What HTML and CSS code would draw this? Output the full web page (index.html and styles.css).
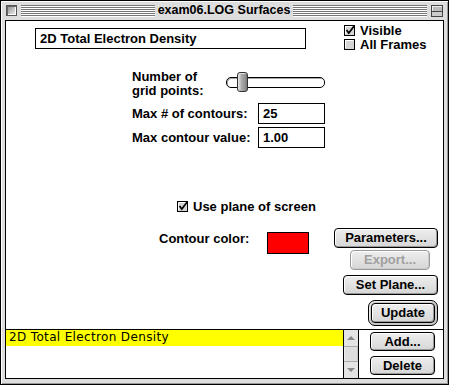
FILE: index.html
```html
<!DOCTYPE html>
<html>
<head>
<meta charset="utf-8">
<link rel="stylesheet" href="styles.css">
</head>
<body>
<div class="window">
  <div class="titlebar">
    <span class="closebox"></span>
    <span class="stripes"></span>
    <span class="title">exam06.LOG Surfaces</span>
    <span class="stripes"></span>
    <span class="zoombox"><span class="zoominner"></span></span>
  </div>
  <div class="frame">
    <div class="panel">
      <div class="toprow">
        <div class="namefield">2D Total Electron Density</div>
        <div class="checks">
          <div class="check">
            <svg class="cb" width="13" height="13" viewBox="0 0 13 13"><rect x="0.5" y="1.5" width="10" height="10" fill="#d4d4d4" stroke="#000"/><path d="M1.5 10 V2.5 H9.5" fill="none" stroke="#fff"/><path d="M2.5 6 L4.8 9 L10.5 1.5" fill="none" stroke="#000" stroke-width="1.7"/></svg>
            <span>Visible</span>
          </div>
          <div class="check">
            <svg class="cb" width="13" height="13" viewBox="0 0 13 13"><rect x="0.5" y="1.5" width="10" height="10" fill="#d4d4d4" stroke="#000"/><path d="M1.5 10 V2.5 H9.5" fill="none" stroke="#fff"/></svg>
            <span>All Frames</span>
          </div>
        </div>
      </div>
      <div class="params">
        <div class="lbl-grid">Number of<br>grid points:</div>
        <div class="slider">
          <div class="track"></div>
          <div class="thumb"></div>
        </div>
        <div class="lbl">Max # of contours:</div>
        <div class="field">25</div>
        <div class="lbl">Max contour value:</div>
        <div class="field">1.00</div>
      </div>
      <div class="check plane">
        <svg class="cb" width="13" height="13" viewBox="0 0 13 13"><rect x="0.5" y="1.5" width="10" height="10" fill="#d4d4d4" stroke="#000"/><path d="M1.5 10 V2.5 H9.5" fill="none" stroke="#fff"/><path d="M2.5 6 L4.8 9 L10.5 1.5" fill="none" stroke="#000" stroke-width="1.7"/></svg>
        <span>Use plane of screen</span>
      </div>
      <div class="lower">
        <div class="colorrow">
          <span class="colorlbl">Contour color:</span>
          <span class="swatch"></span>
        </div>
        <div class="btncol">
          <div class="btn w-params">Parameters...</div>
          <div class="btn disabled w-export">Export...</div>
          <div class="btn w-plane">Set Plane...</div>
          <div class="default-ring"><div class="btn w-update">Update</div></div>
        </div>
      </div>
    </div>
    <div class="listarea">
      <div class="list">
        <div class="item selected">2D Total Electron Density</div>
      </div>
      <div class="scrollbar">
        <div class="arrowcell"><span class="up"></span></div>
        <div class="scrolltrack"></div>
        <div class="arrowcell"><span class="down"></span></div>
      </div>
      <div class="listbtns">
        <div class="btn w-small">Add...</div>
        <div class="btn w-small">Delete</div>
      </div>
    </div>
  </div>
</div>
</body>
</html>
```
FILE: styles.css
```css
html, body { margin: 0; padding: 0; background: #fff; }
.window {
  width: 449px; height: 385px; box-sizing: border-box;
  border: 1px solid #000; background: #dddddd;
  display: flex; flex-direction: column;
  font: bold 13px "Liberation Sans", Arial, sans-serif; color: #000;
  box-shadow: inset 1px 1px #fff, inset -1px -1px #999;
}
.titlebar {
  height: 19px; flex: none; display: flex; align-items: center;
  padding: 0 5px 0 5px;
}
.closebox {
  width: 11px; height: 11px; box-sizing: border-box; flex: none;
  border: 1px solid #555;
  background: linear-gradient(135deg, #888 0%, #f4f4f4 100%);
  box-shadow: inset 1px 1px #666, inset -1px -1px #fff;
}
.stripes {
  flex: 1; height: 12px; margin-left: 4px;
  background: repeating-linear-gradient(to bottom, #777 0 1px, #fff 1px 2px);
}
.stripes + .zoombox { margin-left: 4px; }
.title { padding: 0 3px; font-size: 12.5px; line-height: 17px; white-space: nowrap; }
.title + .stripes { margin-left: 0; }
.zoombox {
  width: 12px; height: 12px; box-sizing: border-box; flex: none;
  border: 1px solid #444; background: #bbb; display: flex; align-items: flex-end;
  box-shadow: inset 1px 1px #eee;
}
.zoominner { display: block; width: 100%; height: 5px; box-sizing: border-box; border-top: 1px solid #444; background: #ccc; }
.frame {
  flex: 1; margin: 0 4px 5px 4px; border: 1px solid #000; background: #fff;
  display: flex; flex-direction: column; min-height: 0;
}
.panel { height: 309px; box-sizing: border-box; border-bottom: 1px solid #000; flex: none; padding-top: 7px; }
.toprow { display: flex; height: 21px; align-items: flex-start; }
.namefield {
  margin-left: 29px; width: 271px; height: 21px; box-sizing: border-box;
  border: 1px solid #000; padding-left: 4px; line-height: 19px; white-space: nowrap;
}
.checks { margin-left: 38px; margin-top: -4px; display: flex; flex-direction: column; }
.check { display: flex; align-items: center; height: 14px; line-height: 14px; gap: 3px; white-space: nowrap; }
.cb { flex: none; margin-top: -2px; }
.params {
  margin-top: 21px; margin-left: 126px;
  display: grid; grid-template-columns: 94px 32px 67px;
  grid-template-rows: 30px 21px 21px; row-gap: 3px;
}
.lbl-grid { grid-column: 1; line-height: 14px; }
.slider { grid-column: 2 / 4; position: relative; height: 20px; margin-top: 2px; }
.track {
  margin-top: 5px; height: 11px; box-sizing: border-box;
  border: 1px solid #000; border-radius: 5px; background: #fff;
  box-shadow: inset 1px 1px #aaa;
}
.thumb {
  position: absolute; left: 11px; top: 0; width: 11px; height: 20px; box-sizing: border-box;
  border: 1px solid #333; border-radius: 3px;
  background: linear-gradient(to right, #eee, #aaa 40%, #999 70%, #777);
  box-shadow: inset 1px 1px #ddd;
}
.lbl { grid-column: 1 / 3; align-self: center; white-space: nowrap; }
.field {
  grid-column: 3; border: 1px solid #000; padding-left: 4px;
  line-height: 19px; box-sizing: border-box; height: 21px;
}
.plane { margin-top: 52px; margin-left: 171px; }
.lower { display: flex; margin-top: 14px; }
.colorrow { flex: 1; display: flex; align-items: flex-start; padding-left: 153px; }
.colorlbl { width: 108px; line-height: 14px; margin-top: 4px; white-space: nowrap; }
.swatch { width: 42px; height: 22px; box-sizing: border-box; border: 1px solid #000; background: #ff0000; margin-top: 4px; }
.btncol { display: flex; flex-direction: column; align-items: flex-end; padding-right: 5px; }
.btn {
  height: 20px; box-sizing: border-box; border: 1px solid #000; border-radius: 4px;
  background: linear-gradient(to bottom, #eeeeee, #d6d6d6);
  box-shadow: inset 1px 1px #fff, inset -1px -1px #999;
  text-align: center; line-height: 18px; white-space: nowrap;
}
.btn.disabled { border-color: #999; color: #a0a0a0; box-shadow: inset 1px 1px #fff, inset -1px -1px #ccc; }
.w-params { width: 104px; }
.w-export { width: 80px; margin-top: 2px; margin-right: 8px; }
.w-plane { width: 95px; margin-top: 5px; }
.default-ring {
  margin-top: 5px; padding: 2px; border: 1px solid #000; border-radius: 7px;
  background: #c8c8c8; box-shadow: inset 1px 1px #eee;
}
.w-update { width: 64px; }
.listarea { flex: 1; display: flex; min-height: 0; }
.list { width: 337px; flex: none; }
.item { height: 16px; line-height: 16px; padding-left: 3px; font: 12px "DejaVu Sans", sans-serif; letter-spacing: 0.35px; white-space: nowrap; }
.item.selected { background: #ffff00; }
.scrollbar {
  width: 16px; box-sizing: border-box; flex: none;
  border-left: 1px solid #000; border-right: 1px solid #000;
  background: #dedede; display: flex; flex-direction: column;
}
.arrowcell { height: 16px; flex: none; display: flex; align-items: center; justify-content: center; background: #e4e4e4; }
.arrowcell:first-child { border-bottom: 1px solid #aaa; }
.arrowcell:last-child { border-top: 1px solid #aaa; }
.scrolltrack { flex: 1; box-shadow: inset 1px 0 #eee, inset -1px 0 #c4c4c4; }
.up { width: 0; height: 0; border-left: 4px solid transparent; border-right: 4px solid transparent; border-bottom: 4px solid #888; }
.down { width: 0; height: 0; border-left: 4px solid transparent; border-right: 4px solid transparent; border-top: 4px solid #888; }
.listbtns { flex: 1; display: flex; flex-direction: column; padding-left: 11px; padding-top: 2px; gap: 5px; }
.w-small { width: 65px; height: 19px; line-height: 17px; }
```
